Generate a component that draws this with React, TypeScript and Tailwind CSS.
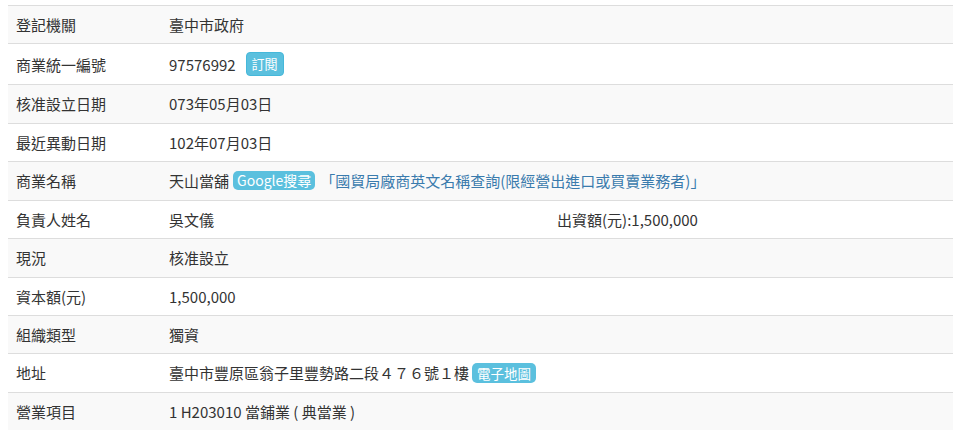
import React from "react";

const font = { fontFamily: '"Noto Sans CJK TC", "Noto Sans", sans-serif' };

function Row({ label, children, odd }: { label: string; children: React.ReactNode; odd: boolean }) {
  return (
    <div className={`flex border-t border-[#dddddd] ${odd ? "bg-[#f9f9f9]" : "bg-white"}`}>
      <div className="w-[153px] shrink-0 p-2 flex items-center">{label}</div>
      <div className="flex-1 p-2 flex items-center">{children}</div>
    </div>
  );
}

export default function App() {
  const rows: { label: string; value: React.ReactNode }[] = [
    { label: "登記機關", value: <span>臺中市政府</span> },
    {
      label: "商業統一編號",
      value: (
        <span className="flex items-center">
          <span>97576992</span>
          <span className="ml-[10px] inline-block rounded-[4px] border border-[#46b8da] bg-[#5bc0de] px-[5px] py-[2px] text-[13px] leading-[18px] text-white">
            訂閱
          </span>
        </span>
      ),
    },
    { label: "核准設立日期", value: <span>073年05月03日</span> },
    { label: "最近異動日期", value: <span>102年07月03日</span> },
    {
      label: "商業名稱",
      value: (
        <span className="flex items-center">
          <span>天山當舖</span>
          <span className="ml-[4px] inline-block rounded-[5px] bg-[#5bc0de] px-[4px] text-[14px] leading-[19px] text-white">
            Google搜尋
          </span>
          <span className="ml-[5px] text-[#3a7bad]">「國貿局廠商英文名稱查詢(限經營出進口或買賣業務者)」</span>
        </span>
      ),
    },
    {
      label: "負責人姓名",
      value: (
        <span className="flex">
          <span className="w-[388px]">吳文儀</span>
          <span>出資額(元):1,500,000</span>
        </span>
      ),
    },
    { label: "現況", value: <span>核准設立</span> },
    { label: "資本額(元)", value: <span>1,500,000</span> },
    { label: "組織類型", value: <span>獨資</span> },
    {
      label: "地址",
      value: (
        <span className="flex items-center">
          <span>臺中市豐原區翁子里豐勢路二段４７６號１樓</span>
          <span className="ml-[3px] inline-block rounded-[5px] bg-[#5bc0de] px-[5px] text-[13.5px] leading-[20px] text-white">
            電子地圖
          </span>
        </span>
      ),
    },
    { label: "營業項目", value: <span>1 H203010 當鋪業 ( 典當業 )</span> },
  ];

  return (
    <div className="w-[969px] h-[435px] bg-white overflow-hidden pt-[5px] px-[8px]" style={font}>
      <div className="w-[945px] text-[15px] leading-[1.42857] text-[#333333]">
        {rows.map((r, i) => (
          <Row key={i} label={r.label} odd={i % 2 === 0}>
            {r.value}
          </Row>
        ))}
      </div>
    </div>
  );
}
